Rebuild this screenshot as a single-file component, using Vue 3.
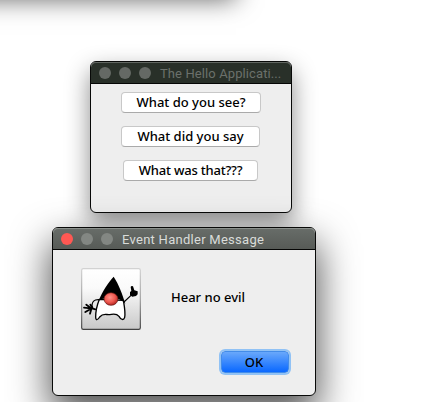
<script setup>
const questions = [
  { text: 'What do you see?', size: 'first' },
  { text: 'What did you say', size: 'second' },
  { text: 'What was that???', size: 'third' },
]
</script>

<template>
  <main class="desktop">
    <div class="offscreen-window"></div>

    <section class="window hello">
      <header class="titlebar">
        <i class="dot"></i><i class="dot"></i><i class="dot"></i>
        <span class="title">The Hello Applicati...</span>
      </header>
      <div class="questions">
        <button v-for="q in questions" :key="q.text" class="btn" :class="q.size"><span>{{ q.text }}</span></button>
      </div>
    </section>

    <section class="window message">
      <header class="titlebar">
        <i class="dot close"></i><i class="dot"></i><i class="dot"></i>
        <span class="title">Event Handler Message</span>
      </header>
      <div class="content">
        <svg class="duke" viewBox="33 24 180 186">
          <defs>
            <linearGradient id="tile" x1="0" y1="0" x2="0" y2="1">
              <stop offset="0" stop-color="#fff" /><stop offset=".32" stop-color="#fafafa" />
              <stop offset="1" stop-color="#c8c8c8" />
            </linearGradient>
            <linearGradient id="edge" x1="0" y1="0" x2="0" y2="1">
              <stop offset="0" stop-color="#d2d2d2" /><stop offset=".5" stop-color="#a0a0a0" />
              <stop offset="1" stop-color="#414141" />
            </linearGradient>
            <radialGradient id="nose" cx=".42" cy=".38" r=".62">
              <stop offset="0" stop-color="#ff9189" /><stop offset=".6" stop-color="#ee5950" />
              <stop offset="1" stop-color="#b42722" />
            </radialGradient>
          </defs>
          <rect x="35" y="26" width="176" height="182" rx="5" fill="url(#tile)" stroke="url(#edge)" stroke-width="3.5" />
          <path d="M90 119 C72 117 65 124 66 143 M162 126 L183 106" fill="none" stroke="#000" stroke-width="3.5" />
          <path d="M88 118 C80 139 77 158 77 170 C77 183 83 181 89 171 C99 159 108 164 116 164 C126 164 137 157 147 169 C153 180 161 182 164 172 C167 157 163 139 160 121 Z" fill="#fff" stroke="#000" stroke-width="4" stroke-linejoin="round" />
          <path d="M131 50 C117 65 97 93 86 122 C94 117 102 115 109 116 L143 117 C151 118 158 123 166 131 C158 105 146 72 131 50 Z" fill="#000" />
          <ellipse cx="123" cy="117" rx="21" ry="19" fill="url(#nose)" stroke="#5c1714" stroke-width="2" />
          <path d="M76 148 L62 144 L49 134 M61 145 L42 143 M62 147 L46 156 M64 147 L60 161 M67 142 L61 134" fill="none" stroke="#000" stroke-width="5.5" stroke-linecap="round" />
          <path d="M180 96 L184 93 L182 81 Q184 76 189 79 L193 91 L203 94 L203 103 L198 108 L187 110 L180 106 Z" fill="#000" />
        </svg>
        <p class="text">Hear no evil</p>
      </div>
      <footer class="actions"><button class="ok">OK</button></footer>
    </section>
  </main>
</template>

<style>
body { margin: 0; overflow: hidden; }
</style>

<style scoped>
.desktop {
  position: relative;
  width: 427px;
  height: 402px;
  overflow: hidden;
  background: #fff;
}
.offscreen-window {
  position: absolute;
  left: -60px;
  top: -200px;
  width: 296px;
  height: 196px;
  box-shadow: 0 3px 24px rgba(0, 0, 0, .62);
}
.window {
  position: absolute;
  box-sizing: border-box;
  display: flex;
  flex-direction: column;
  border: 1px solid #080908;
  border-radius: 6px;
  background: #eee;
}
.hello {
  left: 90px;
  top: 61px;
  width: 202px;
  height: 152px;
  box-shadow: 0 10px 24px rgba(0, 0, 0, .46);
}
.message {
  left: 52px;
  top: 227px;
  width: 264px;
  height: 169px;
  box-shadow: 0 17px 38px 2px rgba(0, 0, 0, .68);
}
.titlebar {
  box-sizing: border-box;
  display: flex;
  align-items: center;
  flex: none;
  height: 22px;
  padding-left: 8px;
  gap: 8px;
  border-radius: 5px 5px 0 0;
  border-bottom: 1px solid #050605;
  background: #293029;
  box-shadow: inset 0 1px #626762;
}
.message .titlebar {
  background: linear-gradient(#686d69, #575b57);
  box-shadow: inset 0 1px #8b908c;
}
.dot {
  width: 12px;
  height: 12px;
  border-radius: 50%;
  background: #656965;
}
.message .dot { background: #838783; }
.message .dot.close { background: #ff5853; }
.title {
  padding: 2px 0 0 1px;
  font: 13px/19px Roboto, sans-serif;
  letter-spacing: .1px;
  white-space: nowrap;
  color: #6b706b;
}
.message .title {
  letter-spacing: .27px;
  color: #d9dcd9;
}
.questions {
  display: flex;
  flex-direction: column;
  align-items: flex-start;
  gap: 13px;
  padding: 8px 0 0 30px;
}
.btn, .ok, .text {
  font: 500 13px/19px "Noto Sans", "Open Sans", sans-serif;
  color: #000;
  white-space: nowrap;
}
.btn {
  box-sizing: border-box;
  height: 21px;
  padding: 0;
  border: 1px solid #c8c8c8;
  border-bottom-color: #aaa;
  border-radius: 4px;
  background: #fff;
}
.first { width: 140px; }
.second { width: 139px; }
.third {
  width: 135px;
  margin-left: 2px;
  letter-spacing: -.2px;
}
.content {
  display: flex;
  align-items: center;
  gap: 30px;
  padding: 18px 0 0 28px;
}
.duke {
  display: block;
  width: 60px;
  height: 62px;
}
.text {
  margin: 0;
  padding-bottom: 4px;
}
.actions {
  display: flex;
  justify-content: flex-end;
  padding: 21px 26px 0 0;
}
.ok {
  box-sizing: border-box;
  width: 68px;
  height: 22px;
  padding: 0 2px 0 0;
  border: 1px solid #438ce9;
  border-radius: 4px;
  background: linear-gradient(#69a8fb, #0a68ff);
  box-shadow: 0 0 0 2px #91c2f5;
}
</style>
